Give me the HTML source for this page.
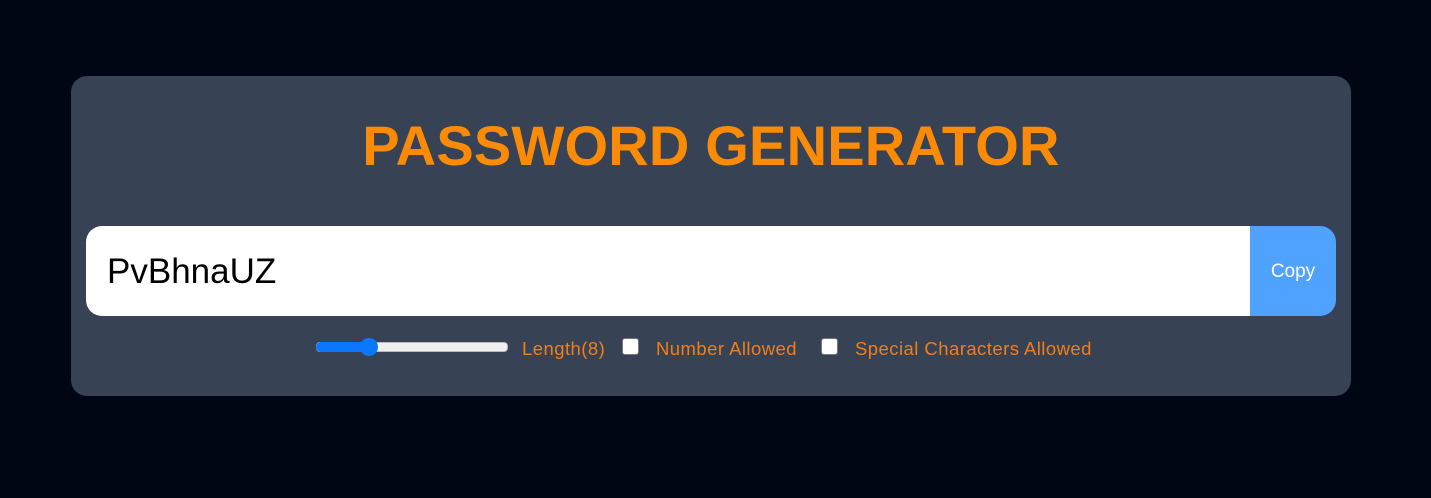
<!DOCTYPE html>
<html><head><style>
html,body{margin:0;width:1431px;height:498px;background:#010614;font-family:"Liberation Sans",sans-serif;overflow:hidden}
.card{position:absolute;left:71px;top:76px;width:1280px;height:320px;background:#374254;border-radius:16px}
h1{position:absolute;left:0;right:0;top:40px;margin:0;text-align:center;color:#fb8b07;font-size:56px;font-weight:bold;line-height:60px;letter-spacing:0.2px}
.inp{position:absolute;left:15px;top:150px;width:1164px;height:90px;background:#fff;border-radius:16px 0 0 16px;font-size:35px;line-height:92px;padding-left:21px;box-sizing:border-box;color:#000}
.btn{position:absolute;left:1179px;top:150px;width:86px;height:90px;background:#4fa2fe;border-radius:0 16px 16px 0;color:#fff;font-size:19px;line-height:92px;text-align:center}
.row{position:absolute;top:262px;left:0;height:20px;color:#f47d16;font-size:18.5px;letter-spacing:0.45px}
.row span{position:absolute;top:0px;white-space:nowrap}
.track{position:absolute;left:245px;top:4px;width:190px;height:8px;background:#efefef;border-radius:4px;border:1px solid #bbb}
.fill{position:absolute;left:245px;top:4px;width:54px;height:10px;background:#0b76fe;border-radius:5px}
.thumb{position:absolute;left:289px;top:0;width:18px;height:18px;background:#0b76fe;border-radius:50%}
.cb{position:absolute;top:0;width:17px;height:17px;background:#fff;border-radius:3px;border:1px solid #777;box-sizing:border-box}
</style></head><body>
<div class="card">
<h1>PASSWORD GENERATOR</h1>
<div class="inp">PvBhnaUZ</div>
<div class="btn">Copy</div>
<div class="row">
<div class="track"></div><div class="fill"></div><div class="thumb"></div>
<span style="left:451px">Length(8)</span>
<div class="cb" style="left:551px"></div>
<span style="left:585px">Number Allowed</span>
<div class="cb" style="left:750px"></div>
<span style="left:784px">Special Characters Allowed</span>
</div>
</div>
</body></html>
